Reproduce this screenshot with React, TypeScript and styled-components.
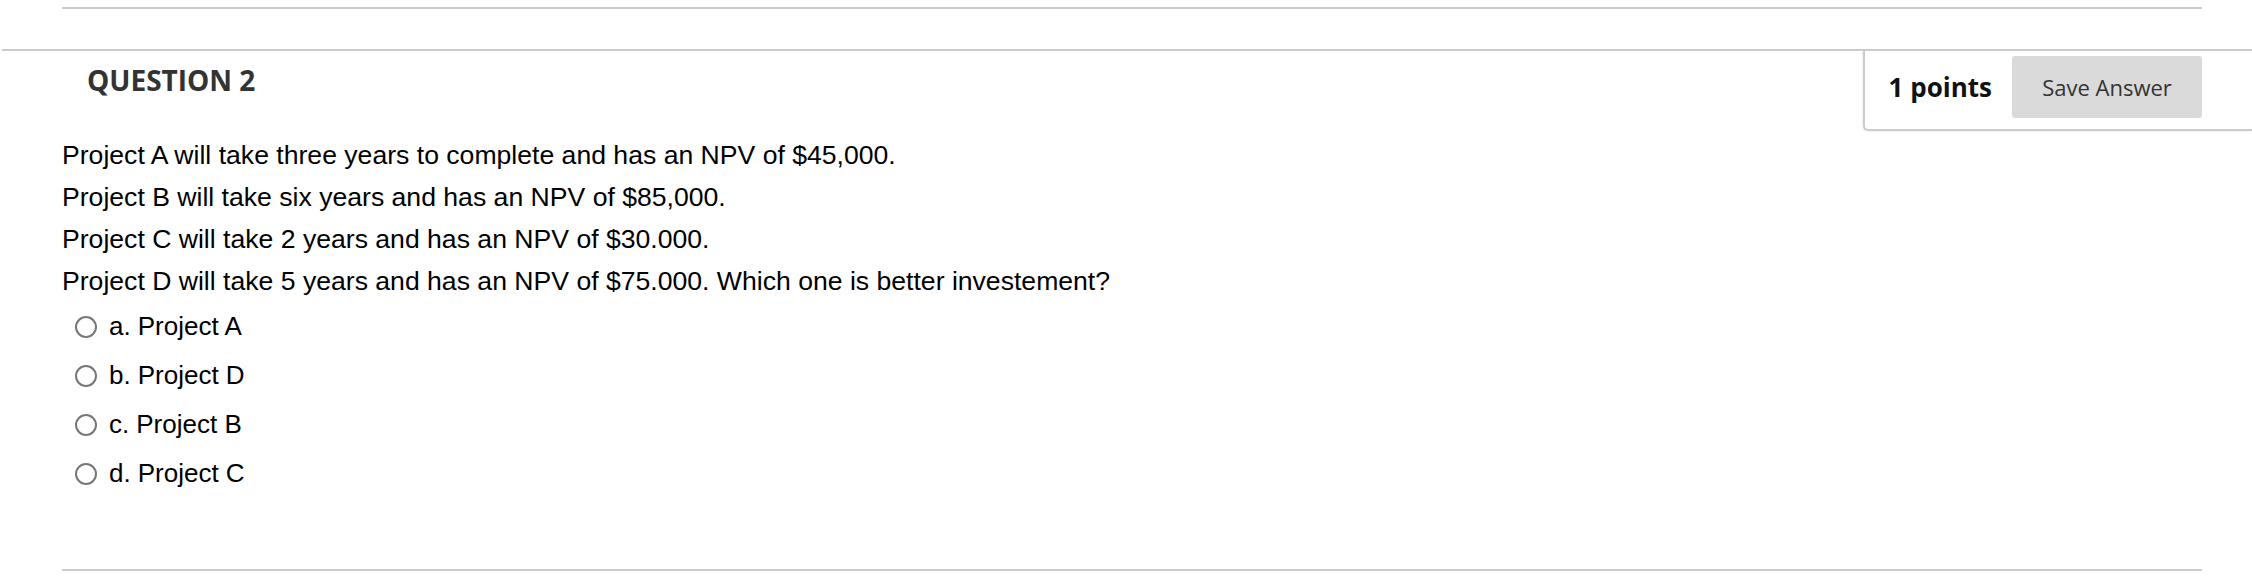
import React from "react";
import styled, { createGlobalStyle } from "styled-components";

const GlobalStyle = createGlobalStyle`
  html, body {
    margin: 0;
    padding: 0;
    background: #ffffff;
  }
  body {
    font-family: "Liberation Sans", Arial, sans-serif;
  }
  * { box-sizing: border-box; }
`;

const Page = styled.div`
  width: 2252px;
  padding-top: 7px;
`;

const Rule = styled.div<{ $top?: number }>`
  height: 2px;
  background: #cccccc;
  margin: ${(p) => p.$top ?? 0}px 50px 0 62px;
`;

const QuestionBlock = styled.section`
  margin: 40px 0 0 2px;
  border-top: 2px solid #cccccc;
`;

const Header = styled.div`
  display: flex;
  justify-content: space-between;
  align-items: flex-start;
`;

const Title = styled.h2`
  margin: 10px 0 0 85px;
  font-family: "Open Sans", sans-serif;
  font-weight: 700;
  font-size: 28px;
  line-height: 38px;
  color: #333333;
`;

const PointsBox = styled.div`
  display: flex;
  align-items: center;
  gap: 20px;
  padding: 5px 50px 11px 24px;
  border-left: 2px solid #cccccc;
  border-bottom: 2px solid #cccccc;
  border-bottom-left-radius: 5px;
  box-shadow: -1px 1px 2px rgba(0, 0, 0, 0.06);
`;

const Points = styled.span`
  font-family: "Open Sans", sans-serif;
  font-weight: 700;
  font-size: 26px;
  color: #111111;
  white-space: nowrap;
`;

const SaveButton = styled.button`
  width: 190px;
  height: 62px;
  border: none;
  border-radius: 3px;
  background: #dadada;
  font-family: "Open Sans", sans-serif;
  font-size: 22px;
  color: #333333;
  padding: 0;
  cursor: pointer;
`;

const Body = styled.div`
  margin: 3px 0 0 60px;
  font-family: "Liberation Sans", Arial, sans-serif;
  font-size: 26.6px;
  color: #000000;
`;

const Line = styled.p`
  margin: 0;
  line-height: 42px;
  white-space: nowrap;
`;

const Options = styled.div`
  margin-top: 0;
  display: flex;
  flex-direction: column;
  font-size: 26px;
`;

const Option = styled.label`
  display: flex;
  align-items: center;
  height: 49px;
  line-height: 49px;
`;

const Radio = styled.span`
  width: 22px;
  height: 22px;
  border-radius: 50%;
  border: 2px solid #777777;
  background: #ffffff;
  margin: 0 12px 0 13px;
  flex: none;
`;

const Letter = styled.span`
  margin-right: 7px;
`;

const lines = [
  "Project A will take three years to complete and has an NPV of $45,000.",
  "Project B will take six years and has an NPV of $85,000.",
  "Project C will take 2 years and has an NPV of $30.000.",
  "Project D will take 5 years and has an NPV of $75.000. Which one is better investement?",
];

const options = [
  { letter: "a.", text: "Project A" },
  { letter: "b.", text: "Project D" },
  { letter: "c.", text: "Project B" },
  { letter: "d.", text: "Project C" },
];

export default function App() {
  return (
    <>
      <GlobalStyle />
      <Page>
        <Rule />
        <QuestionBlock>
          <Header>
            <Title>QUESTION 2</Title>
            <PointsBox>
              <Points>1 points</Points>
              <SaveButton>Save Answer</SaveButton>
            </PointsBox>
          </Header>
          <Body>
            {lines.map((l) => (
              <Line key={l}>{l}</Line>
            ))}
            <Options>
              {options.map((o) => (
                <Option key={o.letter}>
                  <Radio />
                  <Letter>{o.letter}</Letter>
                  {o.text}
                </Option>
              ))}
            </Options>
          </Body>
        </QuestionBlock>
        <Rule $top={71} />
      </Page>
    </>
  );
}
